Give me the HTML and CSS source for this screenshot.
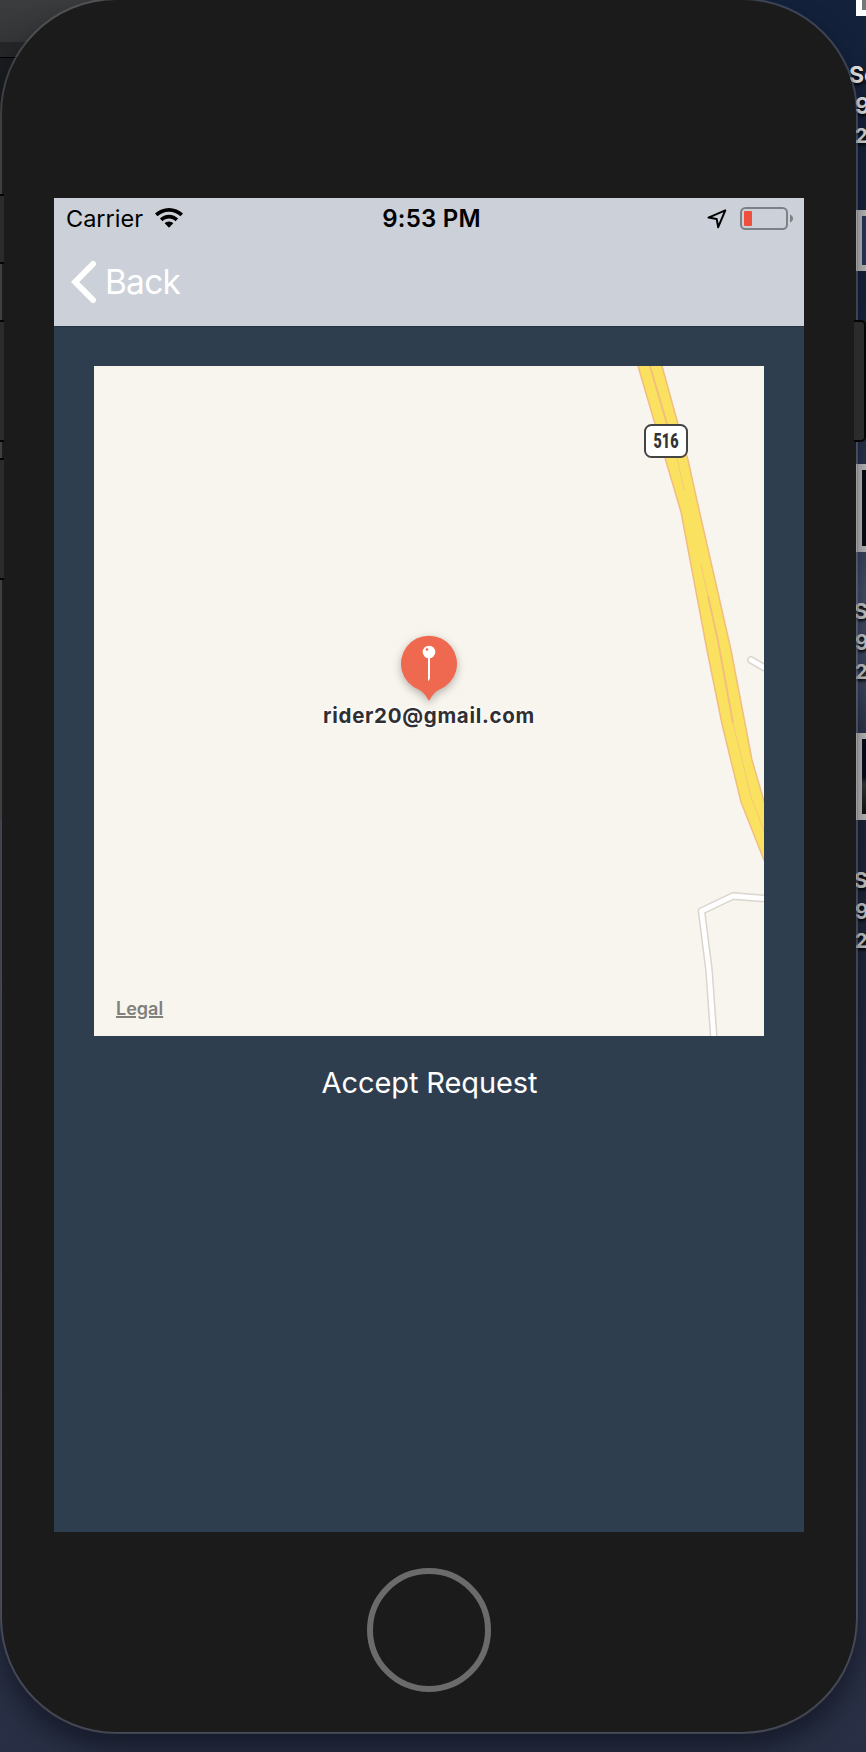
FILE: index.html
```html
<!DOCTYPE html>
<html lang="en">
<head>
<meta charset="utf-8">
<title>Accept Request</title>
<link rel="stylesheet" href="styles.css">
</head>
<body>
<div class="desktop">
  <div class="window"><div class="window-title"></div><div class="window-tabs"></div></div>
  <div class="thumb thumb-a"></div>
  <div class="file file-a"><span>Sc</span><span>9</span><span>2</span></div>
  <div class="thumb thumb-b"></div>
  <div class="thumb thumb-c"></div>
  <div class="file file-b"><span>S</span><span>9</span><span>2</span></div>
  <div class="thumb thumb-d"></div>
  <div class="file file-c"><span>S</span><span>9</span><span>2</span></div>

  <main class="phone">
    <i class="key key-mute"></i><i class="key key-up"></i><i class="key key-down"></i><i class="key key-power"></i>
    <div class="screen">
      <header class="topbar">
        <div class="status">
          <div class="status-left">
            <span class="carrier">Carrier</span>
            <svg class="wifi" width="28" height="20" viewBox="0 0 28 20">
              <path d="M14 0C8.600 0 3.700 2.100 0 5.600L2.500 8.300C5.500 5.400 9.600 3.700 14 3.700s8.500 1.700 11.500 4.600L28 5.600C24.300 2.100 19.400 0 14 0z"/>
              <path d="M14 6.800c-3.500 0-6.700 1.400-9.100 3.700l2.600 2.700c1.700-1.600 4-2.600 6.500-2.600s4.800 1 6.500 2.600l2.600-2.700C20.700 8.200 17.500 6.800 14 6.800z"/>
              <path d="M14 13.400c-1.700 0-3.200.7-4.300 1.800L14 19.800l4.300-4.600c-1.100-1.100-2.600-1.800-4.300-1.800z"/>
            </svg>
          </div>
          <span class="time">9:53 PM</span>
          <div class="status-right">
            <svg class="locate" width="20" height="20" viewBox="0 0 20 20"><path d="M18.300 1.300L1.500 8.600l8.200 1.300 1.500 8.300z"/></svg>
            <svg class="battery" width="54" height="24" viewBox="0 0 54 24">
              <rect class="battery-case" x="1" y="1" width="46" height="21" rx="4.500"/>
              <rect class="battery-level" x="4" y="4" width="8" height="15" rx="1"/>
              <path class="battery-tip" d="M50 7.500c2 .8 3 2.300 3 4s-1 3.200-3 4z"/>
            </svg>
          </div>
        </div>
        <nav class="nav">
          <svg class="chevron" width="26" height="44" viewBox="0 0 26 44"><path d="M22 4L4.200 22 22 40"/></svg>
          <span class="back">Back</span>
        </nav>
      </header>
      <section class="content">
        <div class="map">
          <svg width="670" height="670" viewBox="94 366 670 670">
            <path class="highway" d="M638 366L655 424 681 512 707 650 722 724 741 802 766 865V808L752 760 731 650 700 514 688 460 678 424 662 366L658 350H634z"/>
            <path class="median" d="M650 366L667 424"/>
            <path class="median thin" d="M667 424L678 462 684 490"/>
            <path class="median thin" d="M701 565L708 596"/>
            <path class="median" d="M708 596L718 641 733 723"/>
            <path class="median thin" d="M733 723L742 760 751 797 766 836"/>
            <path class="street-edge" d="M770 899L733 896 701.500 911 709 970 714 1040M751 660L770 671"/>
            <path class="street" d="M770 899L733 896 701.500 911 709 970 714 1040M751 660L770 671"/>
            <rect class="shield" x="645" y="425" width="42" height="32" rx="6.500"/>
            <text class="route" x="653.500" y="448" textLength="25" lengthAdjust="spacingAndGlyphs">516</text>
            <path class="pin" d="M429 701c-2-3-4-8-10-11.200a28 28 0 1 1 20 0c-6 3.200-8 8.200-10 11.200z"/>
            <circle class="pin-mark" cx="429" cy="652" r="6.300"/>
            <path class="pin-mark" d="M428 658h2v20l-1.200 3-.8-1z"/>
            <circle class="pin-dot" cx="427" cy="649.500" r="1.300"/>
          </svg>
          <span class="rider">rider20@gmail.com</span>
          <span class="legal">Legal</span>
        </div>
        <div class="accept">Accept Request</div>
      </section>
    </div>
    <div class="home"></div>
  </main>
</div>
</body>
</html>
```

FILE: styles.css
```css
* { box-sizing: border-box; }
body { margin: 0; font-family: Inter, "Liberation Sans", sans-serif; }

.desktop {
  position: relative;
  width: 866px;
  height: 1752px;
  overflow: hidden;
  background: linear-gradient(#13213b 0, #17233b 300px, #2b3852 500px, #46506b 590px, #3b4660 690px, #1d2438 780px, #20283d 1000px, #2a3045 1500px, #282f44 1752px);
}
.window { position: absolute; left: 0; top: 0; width: 130px; height: 820px; background: #1a1c1f; }
.window-title { height: 42px; background: linear-gradient(#3b3c3e, #343537); }
.window-tabs { height: 16px; background: #252628; border-bottom: 1px solid #000; }

.thumb { position: absolute; left: 856px; width: 30px; border: 6px solid #c4c3c2; }
.thumb-a { height: 56px; top: -40px; border-color: #fff; background: #777; }
.thumb-b { top: 210px; height: 61px; background: #273a60; }
.thumb-c { top: 464px; height: 88px; background: #070b19; }
.thumb-d { top: 733px; height: 87px; background: linear-gradient(#060a1c 50%, #39353a 60%, #111); }

.file {
  position: absolute;
  left: 855px;
  width: 60px;
  display: flex;
  flex-direction: column;
  font-weight: 700;
  font-size: 21px;
  line-height: 31px;
  color: #d0d0d0;
  text-shadow: 0 2px 3px #000;
}
.file span:first-child { margin-left: -1px; }
.file span:last-child { font-size: 20px; line-height: 29px; }
.file-a { top: 60px; color: #e6e6e6; font-size: 23px; }
.file-a span:first-child { margin-left: -6px; }
.file-b { top: 596px; }
.file-c { top: 865px; }

.phone {
  position: relative;
  display: flex;
  flex-direction: column;
  align-items: center;
  width: 858px;
  height: 1736px;
  margin-top: -2px;
  padding-top: 198px;
  border: 2px solid rgba(110, 110, 114, 0.45);
  border-radius: 116px;
  background: #1b1b1b padding-box;
  box-shadow: 0 14px 24px rgba(5, 8, 18, 0.5);
}
.key { position: absolute; left: -2px; width: 4px; background: #2b2b2b; border: solid #050505; border-width: 2px 0; }
.key-mute { top: 194px; height: 70px; }
.key-up { top: 320px; height: 122px; }
.key-down { top: 458px; height: 122px; }
.key-power { left: 852px; top: 320px; width: 12px; height: 122px; border-right-width: 2px; border-radius: 0 5px 5px 0; }

.screen { width: 750px; height: 1334px; background: #2f3e4e; }
.topbar { height: 128px; background: #ccd0d8; }
.status { display: grid; grid-template-columns: 1fr auto 1fr; align-items: center; height: 40px; padding: 0 10px 0 12px; }
.status-left { display: flex; align-items: center; gap: 12px; font-size: 23.500px; }
.wifi { margin-top: -1px; }
.time { margin-left: 3px; font-size: 24px; font-weight: 600; letter-spacing: 0.2px; }
.status-right { display: flex; align-items: center; justify-content: flex-end; gap: 13px; padding-top: 1px; }
.locate { fill: none; stroke: #000; stroke-width: 2; stroke-linejoin: round; }
.battery-case { fill: none; stroke: #7d8085; stroke-width: 2; }
.battery-level { fill: #ef4f3d; }
.battery-tip { fill: #7d8085; }
.nav { display: flex; align-items: center; height: 88px; padding-left: 17px; gap: 8px; font-size: 33.500px; letter-spacing: -0.8px; color: #fff; }
.chevron { fill: none; stroke: #fff; stroke-width: 6; stroke-linecap: round; stroke-linejoin: miter; }

.content { padding: 39px 40px 0; border-top: 1px solid #263340; }
.map { position: relative; width: 670px; height: 670px; background: #f8f5ee; overflow: hidden; }
.map svg { display: block; }
.highway { fill: #fbe160; stroke: #f2bd7f; stroke-width: 1.500; }
.median { fill: none; stroke: #f2bd7f; stroke-width: 1.800; }
.thin { stroke-width: 0.700; }
.street-edge { fill: none; stroke: #dad5cd; stroke-width: 7.800; stroke-linecap: round; stroke-linejoin: round; }
.street { fill: none; stroke: #fff; stroke-width: 4.800; stroke-linecap: round; stroke-linejoin: round; }
.shield { fill: #fff; stroke: #444; stroke-width: 2; }
.route { font-family: Roboto, sans-serif; font-weight: 900; font-size: 20px; fill: #333; }
.pin { fill: #ef6950; filter: drop-shadow(0 3px 4px rgba(0, 0, 0, 0.28)); }
.pin-mark { fill: #fff; }
.pin-dot { fill: #ef6950; }
.rider {
  position: absolute;
  left: 0;
  right: 0;
  top: 337px;
  text-align: center;
  font-size: 20.500px;
  line-height: 26px;
  font-weight: 700;
  letter-spacing: 0.7px;
  color: #303034;
  text-shadow: 0 0 2px #fff, 0 0 3px #fff, 1px 1px 2px #fff, -1px -1px 2px #fff;
}
.legal {
  position: absolute;
  left: 22px;
  top: 632px;
  font-size: 18px;
  line-height: 22px;
  font-weight: 600;
  color: #807f7b;
  text-decoration: underline;
  text-decoration-thickness: 2px;
}
.accept { margin-top: 28px; padding-left: 1px; text-align: center; font-size: 29px; letter-spacing: -0.1px; line-height: 38px; color: #fff; }
.home { width: 124px; height: 124px; margin-top: 36px; border: 6px solid #6b6b6b; border-radius: 50%; }
```
